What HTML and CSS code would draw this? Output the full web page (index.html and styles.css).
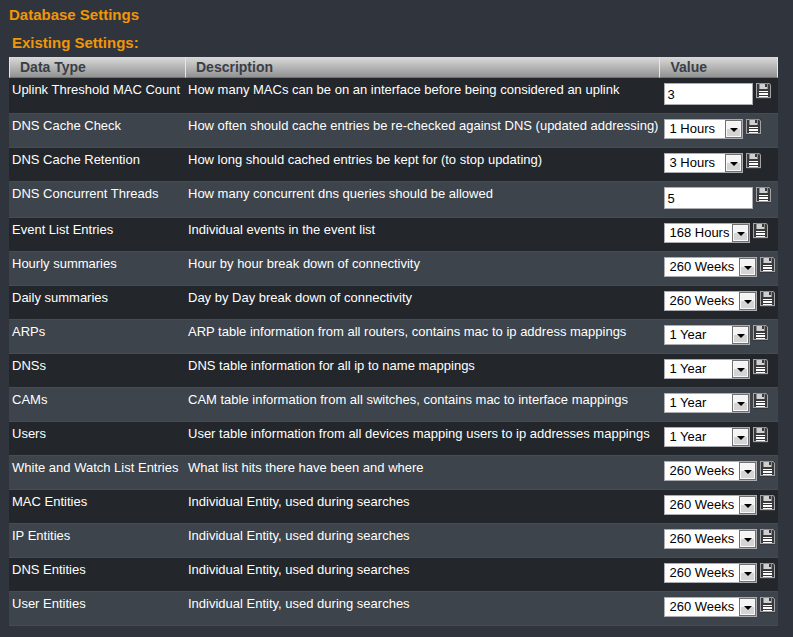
FILE: index.html
```html
<!DOCTYPE html>
<html lang="en">
<head>
<meta charset="utf-8">
<title>Database Settings</title>
<link rel="stylesheet" href="styles.css">
</head>
<body>
<svg class="sprite" aria-hidden="true">
  <symbol id="disk" viewBox="0 0 15 16">
    <path fill="#34383d" d="M0 0h15v16H0z"/>
    <path fill="#a4a4a4" d="M0 0h13l2 2v13H0z"/>
    <path fill="#3a3a3c" d="M1 1h12l1 1v12H1z"/>
    <path fill="#8e8e8e" d="M3 0h9v6H3z"/>
    <path fill="#cfcfcf" d="M4 1h7v5H4z"/>
    <path fill="#3a3a3c" d="M9 1h2v3H9z"/>
    <path fill="#fff" d="M3 8h9v1H3zM3 10h9v2H3zM3 13h9v1H3z"/>
  </symbol>
</svg>
<main>
  <h1>Database Settings</h1>
  <h2>Existing Settings:</h2>
  <table>
    <colgroup><col class="col-type"><col class="col-desc"><col></colgroup>
    <thead><tr><th scope="col">Data Type</th><th scope="col">Description</th><th scope="col">Value</th></tr></thead>
    <tbody id="settings"></tbody>
  </table>
</main>
<script src="settings.js"></script>
</body>
</html>
```
FILE: settings.js
```js
const settings = [
  ["Uplink Threshold MAC Count", "How many MACs can be on an interface before being considered an uplink", "3", "text"],
  ["DNS Cache Check", "How often should cache entries be re-checked against DNS (updated addressing)", "1 Hours", "short"],
  ["DNS Cache Retention", "How long should cached entries be kept for (to stop updating)", "3 Hours", "short"],
  ["DNS Concurrent Threads", "How many concurrent dns queries should be allowed", "5", "text"],
  ["Event List Entries", "Individual events in the event list", "168 Hours", "medium"],
  ["Hourly summaries", "Hour by hour break down of connectivity", "260 Weeks", "long"],
  ["Daily summaries", "Day by Day break down of connectivity", "260 Weeks", "long"],
  ["ARPs", "ARP table information from all routers, contains mac to ip address mappings", "1 Year", "medium"],
  ["DNSs", "DNS table information for all ip to name mappings", "1 Year", "medium"],
  ["CAMs", "CAM table information from all switches, contains mac to interface mappings", "1 Year", "medium"],
  ["Users", "User table information from all devices mapping users to ip addresses mappings", "1 Year", "medium"],
  ["White and Watch List Entries", "What list hits there have been and where", "260 Weeks", "long"],
  ["MAC Entities", "Individual Entity, used during searches", "260 Weeks", "long"],
  ["IP Entities", "Individual Entity, used during searches", "260 Weeks", "long"],
  ["DNS Entities", "Individual Entity, used during searches", "260 Weeks", "long"],
  ["User Entities", "Individual Entity, used during searches", "260 Weeks", "long"]
];

document.getElementById("settings").innerHTML = settings.map(([name, description, value, kind], i) => {
  const id = `setting-${i}`;
  const control = kind === "text"
    ? `<input class="field" id="${id}" type="text" value="${value}">`
    : `<span class="picker ${kind}"><select id="${id}"><option>${value}</option></select></span>`;
  return `<tr>
    <td><label for="${id}">${name}</label></td>
    <td>${description}</td>
    <td class="value"><div class="controls">${control}<button class="save" type="button" aria-label="Save"><svg width="15" height="16"><use href="#disk"/></svg></button></div></td>
  </tr>`;
}).join("");
```
FILE: styles.css
```css
* { box-sizing: border-box; }

body {
  margin: 0;
  background: #30343c;
  color: #fff;
  font: 13px/16px "Liberation Sans", Arial, sans-serif;
}

.sprite { position: absolute; width: 0; height: 0; }

main { padding: 5px 15px 11px 9px; }

h1, h2 {
  margin: 0;
  color: #f09609;
  font-size: 15px;
  line-height: 20px;
}

h2 { padding: 0 3px; margin: 8px 0 4px; }

table {
  width: 100%;
  border-collapse: separate;
  border-spacing: 0;
  table-layout: fixed;
}

.col-type { width: 176px; }
.col-desc { width: 61.7%; }

th {
  height: 21px;
  padding: 0 0 0 10px;
  border-left: 1px solid #e6e6e6;
  border-bottom: 1px solid #707274;
  background: linear-gradient(#dadada, #929292);
  color: #3a3e46;
  font-size: 14px;
  line-height: 20px;
  text-align: left;
}

th:last-child { border-right: 1px solid #e6e6e6; }

td {
  padding: 4px 0 0 3px;
  border-bottom: 1px solid #474c52;
  vertical-align: top;
  white-space: nowrap;
}

tbody tr { height: 34px; background: #23272b; }
tbody tr:nth-child(even) { background: #3d444b; }

td.value { padding: 5px 0 8px 5px; }

.controls { display: flex; align-items: flex-start; gap: 3px; }

.field {
  width: 89px;
  height: 22px;
  padding: 1px 2px;
  border: 1px solid #abadb3;
  background: #fff;
  color: #000;
  font: inherit;
}

.picker { position: relative; height: 20px; }
.short { width: 79px; }
.medium { width: 86px; }
.long { width: 93px; }

select {
  display: block;
  width: 100%;
  height: 20px;
  padding: 0 18px 0 4px;
  border: 1px solid #abadb3;
  border-radius: 0;
  background: #fff;
  color: #000;
  font: inherit;
  appearance: none;
}

.picker::before {
  content: "";
  box-sizing: border-box;
  position: absolute;
  top: 1px;
  right: 1px;
  width: 17px;
  height: 18px;
  border: 1px solid #707070;
  background: linear-gradient(#f4f4f4 50%, #d4d4d4 50%);
  box-shadow: inset 0 0 0 1px #f8f8f8;
  pointer-events: none;
}

.picker::after {
  content: "";
  position: absolute;
  top: 9px;
  right: 5px;
  border: solid transparent;
  border-width: 4px 4px 0;
  border-top-color: #000;
  pointer-events: none;
}

.save {
  padding: 0;
  border: 0;
  background: none;
  cursor: pointer;
}

.save svg { display: block; }
```
